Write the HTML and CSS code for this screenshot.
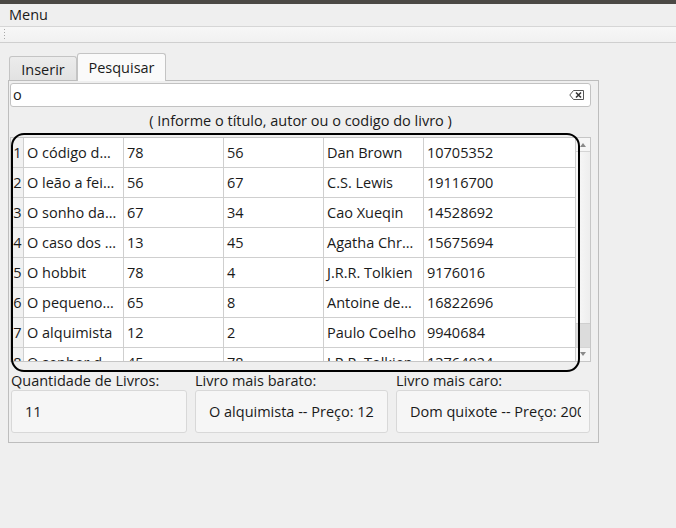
FILE: index.html
```html
<!DOCTYPE html>
<html lang="pt">
<head>
<meta charset="utf-8">
<link rel="stylesheet" href="styles.css">
</head>
<body>
<div class="topbar"></div>
<div class="menubar"><span class="menu-item">Menu</span></div>
<div class="toolbar"><span class="grip"></span></div>
<div class="content">
  <div class="tabs">
    <div class="tab">Inserir</div>
    <div class="tab active">Pesquisar</div>
  </div>
  <div class="pane">
    <div class="search">
      <span class="search-text">o</span>
      <svg class="clear" width="15" height="10" viewBox="0 0 15 10">
        <path d="M4.5 0.5 H14.5 V9.5 H4.5 L0.8 5 Z" fill="none" stroke="#555" stroke-width="1"/>
        <path d="M7 2.5 L12 7.5 M12 2.5 L7 7.5" stroke="#333" stroke-width="1.6"/>
      </svg>
    </div>
    <div class="hint">( Informe o título, autor ou o codigo do livro )</div>
    <div class="table-wrap">
      <div class="table">
        <div class="grid">
          <div class="row"><div class="rh">1</div><div class="c">O código d…</div><div class="c">78</div><div class="c">56</div><div class="c">Dan Brown</div><div class="c last">10705352</div></div>
          <div class="row"><div class="rh">2</div><div class="c">O leão a fei…</div><div class="c">56</div><div class="c">67</div><div class="c">C.S. Lewis</div><div class="c last">19116700</div></div>
          <div class="row"><div class="rh">3</div><div class="c">O sonho da…</div><div class="c">67</div><div class="c">34</div><div class="c">Cao Xueqin</div><div class="c last">14528692</div></div>
          <div class="row"><div class="rh">4</div><div class="c">O caso dos …</div><div class="c">13</div><div class="c">45</div><div class="c">Agatha Chr…</div><div class="c last">15675694</div></div>
          <div class="row"><div class="rh">5</div><div class="c">O hobbit</div><div class="c">78</div><div class="c">4</div><div class="c">J.R.R. Tolkien</div><div class="c last">9176016</div></div>
          <div class="row"><div class="rh">6</div><div class="c">O pequeno…</div><div class="c">65</div><div class="c">8</div><div class="c">Antoine de…</div><div class="c last">16822696</div></div>
          <div class="row"><div class="rh">7</div><div class="c">O alquimista</div><div class="c">12</div><div class="c">2</div><div class="c">Paulo Coelho</div><div class="c last">9940684</div></div>
          <div class="row"><div class="rh">8</div><div class="c">O senhor d…</div><div class="c">45</div><div class="c">78</div><div class="c">J.R.R. Tolkien</div><div class="c last">13764024</div></div>
        </div>
        <div class="scrollbar">
          <div class="arrow up"></div>
          <div class="track"><div class="handle"></div></div>
          <div class="arrow down"></div>
        </div>
      </div>
      <div class="frame"></div>
    </div>
    <div class="stats">
      <div class="stat">
        <div class="stat-label">Quantidade de Livros:</div>
        <div class="stat-box"><span class="val">11</span></div>
      </div>
      <div class="stat">
        <div class="stat-label">Livro mais barato:</div>
        <div class="stat-box"><span class="val">O alquimista -- Preço: 12</span></div>
      </div>
      <div class="stat">
        <div class="stat-label">Livro mais caro:</div>
        <div class="stat-box"><span class="val">Dom quixote -- Preço: 200</span></div>
      </div>
    </div>
  </div>
</div>
</body>
</html>
```
FILE: styles.css
```css
* { box-sizing: border-box; }
html, body { margin: 0; padding: 0; }
body {
  width: 676px;
  height: 528px;
  background: #efefef;
  font-family: "Open Sans", "Noto Sans", sans-serif;
  font-size: 14.5px;
  color: #1a1a1a;
  overflow: hidden;
}
.topbar { height: 4px; background: #4b4945; }
.menubar {
  height: 22px;
  background: #efefef;
  display: flex;
  align-items: center;
  padding-left: 9px;
}
.menu-item { line-height: 20px; }
.toolbar {
  height: 17px;
  border-top: 1px solid #d6d6d6;
  border-bottom: 1px solid #cfcfcf;
  background: linear-gradient(#f7f7f7, #f1f1f1);
  display: flex;
  align-items: center;
  padding-left: 3px;
}
.grip {
  width: 3px;
  height: 13px;
  background-image: radial-gradient(circle, #a8a8a8 0.7px, transparent 0.9px);
  background-size: 3px 3px;
}
.content { padding: 10px 0 0 8px; }
.tabs {
  display: flex;
  align-items: flex-end;
  padding-left: 1px;
  height: 27px;
  position: relative;
  z-index: 1;
}
.tab {
  height: 24px;
  width: 68px;
  border: 1px solid #c4c4c4;
  border-bottom: none;
  border-radius: 3px 3px 0 0;
  background: linear-gradient(#ececec, #e2e2e2);
  display: flex;
  align-items: center;
  justify-content: center;
  padding-top: 2px;
}
.tab.active {
  height: 28px;
  width: 89px;
  background: #fafafa;
  margin-bottom: -1px;
  padding-top: 0;
}
.pane {
  width: 591px;
  height: 363px;
  border: 1px solid #bdbdbd;
  background: #efefef;
  padding: 2px 7px 0 1px;
}
.search {
  height: 24px;
  background: #ffffff;
  border: 1px solid #c2c2c2;
  border-radius: 3px;
  display: flex;
  align-items: center;
  justify-content: space-between;
  padding: 0 6px 0 2px;
}
.search-text { line-height: 20px; }
.clear { display: block; }
.hint {
  text-align: center;
  height: 26px;
  line-height: 20px;
  padding-top: 4px;
}
.table-wrap {
  position: relative;
  height: 239px;
  padding-top: 4px;
}
.table {
  height: 225px;
  width: 581px;
  border: 1px solid #c6c6c6;
  background: #ffffff;
  display: flex;
}
.grid { flex: 1; overflow: hidden; }
.row {
  display: grid;
  grid-template-columns: 13px 100px 100px 100px 100px 1fr;
  height: 30px;
}
.rh, .c {
  border-right: 1px solid #cfcfcf;
  border-bottom: 1px solid #cfcfcf;
  line-height: 29px;
  white-space: nowrap;
  overflow: hidden;
}
.rh {
  background: #f1f1f1;
  text-align: center;
  padding-left: 1px;
}
.c { padding-left: 3px; }
.c.last { border-right: none; }
.scrollbar {
  width: 15px;
  border-left: 1px solid #cdcdcd;
  display: flex;
  flex-direction: column;
  background: #f3f3f3;
}
.arrow {
  height: 14px;
  position: relative;
  background: #f6f6f6;
}
.arrow.up { border-bottom: 1px solid #d4d4d4; }
.arrow.down { border-top: 1px solid #d4d4d4; }
.arrow::after {
  content: "";
  position: absolute;
  left: 4px;
  border-left: 3px solid transparent;
  border-right: 3px solid transparent;
}
.arrow.up::after { top: 5px; border-bottom: 4px solid #8a8a8a; }
.arrow.down::after { top: 4px; border-top: 4px solid #8a8a8a; }
.track {
  flex: 1;
  background: #dcdcdc;
  display: flex;
  flex-direction: column;
}
.handle {
  height: 172px;
  background: linear-gradient(90deg, #f9f9f9, #eeeeee);
  border-bottom: 1px solid #cfcfcf;
}
.frame {
  position: absolute;
  left: 1px;
  top: 0;
  width: 569px;
  height: 239px;
  border: 2px solid #000000;
  border-radius: 13px;
  pointer-events: none;
}
.stats {
  display: grid;
  grid-template-columns: 176px 193px 194px;
  column-gap: 8px;
  padding-left: 1px;
}
.stat-label { height: 18px; line-height: 18px; }
.stat-box {
  height: 43px;
  background: #f6f6f6;
  border: 1px solid #d8d8d8;
  border-radius: 3px;
  display: flex;
  align-items: center;
  padding-left: 13px;
  padding-right: 8px;
}
.val {
  flex: 1;
  min-width: 0;
  white-space: nowrap;
  overflow: hidden;
}
```
